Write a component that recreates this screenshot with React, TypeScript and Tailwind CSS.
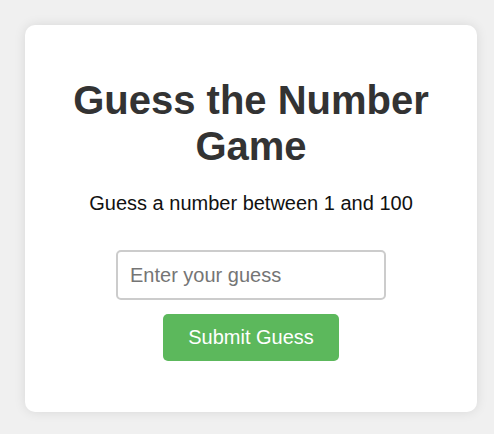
import React from "react";

export default function App() {
  return (
    <div
      className="min-h-[434px] w-full bg-[#f0f0f0] pt-[25px] pl-[25px]"
      style={{ fontFamily: '"Liberation Sans", Arial, sans-serif' }}
    >
      <div className="w-[452px] h-[387px] rounded-[10px] bg-white shadow-[0_0_12px_rgba(0,0,0,0.1)] flex flex-col items-center text-center pt-[52px]">
        <h1 className="text-[40px] leading-[46px] font-bold text-[#333] w-[400px]">
          Guess the Number Game
        </h1>
        <p className="mt-[23px] text-[20px] leading-[23px] text-[#111]">
          Guess a number between 1 and 100
        </p>
        <input
          type="text"
          placeholder="Enter your guess"
          className="mt-[35px] box-border w-[270px] h-[50px] border-2 border-[#ccc] rounded-[5px] pl-[12px] pr-[12px] text-[20px] text-[#333] placeholder:text-[#757575] outline-none bg-white"
        />
        <button className="mt-[14px] w-[176px] h-[47px] rounded-[5px] bg-[#5cb85c] text-white text-[20px] leading-[23px]">
          Submit Guess
        </button>
      </div>
    </div>
  );
}
